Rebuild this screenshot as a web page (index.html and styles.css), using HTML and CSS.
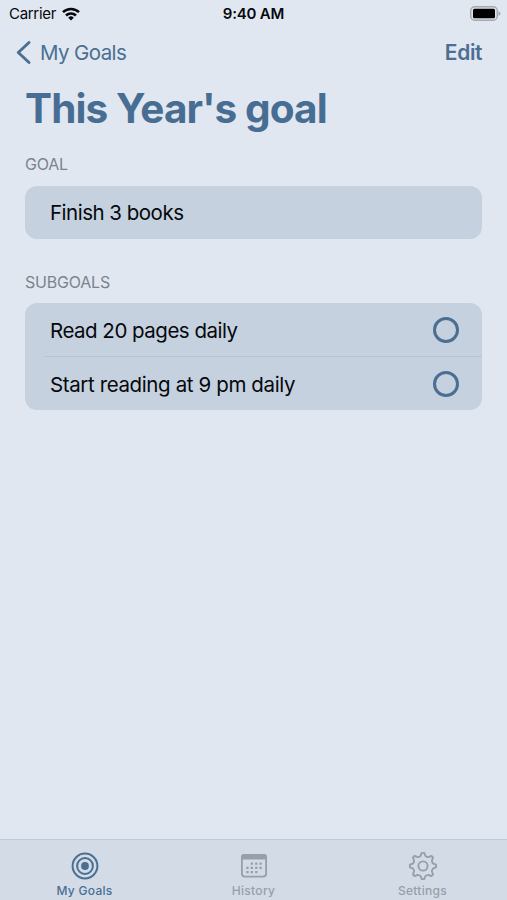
FILE: index.html
```html
<!DOCTYPE html>
<html lang="en">
<head>
<meta charset="utf-8">
<title>This Year's goal</title>
<link rel="stylesheet" href="styles.css">
</head>
<body>
<div class="screen">
  <div class="status">
    <div class="status-left">
      <span class="carrier">Carrier</span>
      <svg class="wifi" width="18" height="14" viewBox="0 0 18 14" fill="none" stroke="#05080c" stroke-width="2.500"><path d="M1 5.200a11.400 11.400 0 0 1 16 0M4 8.500a7.100 7.100 0 0 1 10 0"/><path d="M9 13.500L6.200 10.700a4 4 0 0 1 5.600 0z" fill="#05080c" stroke="none"/></svg>
    </div>
    <span class="time">9:40 AM</span>
    <svg class="battery" width="31" height="15" viewBox="0 0 31 15"><rect x=".7" y=".7" width="26.600" height="13.600" rx="4" fill="#dde1e8" stroke="#a5a9af" stroke-width="1.400"/><rect x="3" y="2.700" width="22" height="9.600" rx="1.500" fill="#000"/><path d="M28.500 5v5q2-1 2-2.500t-2-2.500z" fill="#a5a9af"/></svg>
  </div>
  <nav class="nav">
    <div class="back">
      <svg width="15" height="24" viewBox="0 0 15 24" fill="none" stroke="#4a6f93" stroke-width="2.900" stroke-linecap="round" stroke-linejoin="round"><path d="M13 1.500L2.300 11.500l10.700 10"/></svg>
      <span class="back-label">My Goals</span>
    </div>
    <span class="edit">Edit</span>
  </nav>
  <main class="content">
    <h1>This Year's goal</h1>
    <h2 class="first">GOAL</h2>
    <div class="card"><div class="row"><span class="t1">Finish 3 books</span></div></div>
    <h2 class="second">SUBGOALS</h2>
    <div class="card">
      <div class="row"><span class="t2">Read 20 pages daily</span><i class="check"></i></div>
      <div class="divider"></div>
      <div class="row"><span class="t3">Start reading at 9 pm daily</span><i class="check"></i></div>
    </div>
  </main>
  <footer class="tabs">
    <div class="tab active">
      <svg width="30" height="30" viewBox="-15 -15 30 30" fill="none" stroke="currentColor" stroke-width="2"><circle r="12.400"/><circle r="7.900"/><circle r="3.900" fill="currentColor" stroke="none"/></svg>
      <span>My Goals</span>
    </div>
    <div class="tab">
      <svg width="30" height="30" viewBox="0 0 30 30"><rect x="2.900" y="3.900" width="24.200" height="21.700" rx="3" fill="none" stroke="currentColor" stroke-width="1.800"/><path d="M2 8.500V6q0-3 3-3h20q3 0 3 3v2.500z" fill="currentColor"/><path d="M11.700 12.700h12M7.300 16.900h16.400M7.300 21.100h12" stroke="currentColor" stroke-width="2.300" stroke-dasharray="2.300 2.100" fill="none"/></svg>
      <span>History</span>
    </div>
    <div class="tab">
      <svg width="30" height="30" viewBox="-15 -15 30 30" fill="none" stroke="currentColor" stroke-width="1.900" stroke-linejoin="round"><path id="gear" d="M-1.300 -13Q0 -13.300 1.300 -13L2.400 -10.200Q3.700 -8.900 5.500 -8.900L8.300 -10.100Q9.400 -9.400 10.100 -8.300L8.900 -5.500Q8.900 -3.700 10.200 -2.400L13 -1.300Q13.300 0 13 1.300L10.200 2.400Q8.900 3.700 8.900 5.500L10.100 8.300Q9.400 9.400 8.300 10.100L5.500 8.900Q3.700 8.900 2.400 10.200L1.300 13Q0 13.300 -1.300 13L-2.400 10.200Q-3.700 8.900 -5.500 8.900L-8.300 10.100Q-9.400 9.400 -10.100 8.300L-8.900 5.500Q-8.900 3.700 -10.200 2.400L-13 1.300Q-13.300 0 -13 -1.300L-10.200 -2.400Q-8.900 -3.700 -8.900 -5.500L-10.100 -8.300Q-9.400 -9.400 -8.300 -10.100L-5.500 -8.900Q-3.700 -8.900 -2.400 -10.200Z"/><circle r="4.600"/></svg>
      <span>Settings</span>
    </div>
  </footer>
</div>
</body>
</html>
```
FILE: styles.css
```css
* { box-sizing: border-box; }
body { margin: 0; background: #e1e7f0; font-family: Inter, "Liberation Sans", sans-serif; color: #05080c; }
.screen { height: 900px; display: flex; flex-direction: column; }
.status { height: 27px; display: grid; grid-template-columns: 1fr auto 1fr; align-items: center; padding: 0 6px 0 9px; }
.status-left { display: flex; align-items: center; gap: 6px; }
.carrier { font-size: 15px; letter-spacing: -0.3px; }
.time { margin-right: 3px; font-size: 15px; font-weight: 600; letter-spacing: -0.2px; }
.battery { justify-self: end; }
.nav { height: 51px; display: flex; justify-content: space-between; align-items: center; padding: 0 25px 0 16px; color: #4a6f93; font-size: 21px; }
.back { display: flex; align-items: center; gap: 9px; }
.back-label { font-size: 20.500px; letter-spacing: -0.6px; }
.edit { font-weight: 600; letter-spacing: -0.4px; }
.content { flex: 1; padding: 0 25px; }
h1 { margin: 6px 0 0; height: 50px; line-height: 50px; font-size: 40.500px; font-weight: 700; letter-spacing: -0.900px; color: #486d92; white-space: nowrap; }
h2 { margin: 0; font-size: 16px; font-weight: 400; line-height: 20px; color: #7d838c; letter-spacing: -0.2px; }
.first { margin: 20px 0 12px; }
.second { margin: 33px 0 11px; }
.card { background: #c5d1de; border-radius: 12px; }
.row { height: 53px; display: flex; align-items: center; justify-content: space-between; padding: 0 23px 0 25px; font-size: 20.500px; }
.t1 { letter-spacing: -0.5px; }
.t2 { padding-top: 1px; letter-spacing: -0.500px; }
.t3 { padding-top: 1px; letter-spacing: -0.380px; }
.divider { height: 1px; margin-left: 19px; background: #b8c5d2; }
.check { width: 26px; height: 26px; border: 3px solid #4a6f93; border-radius: 50%; }
.tabs { height: 61px; border-top: 1px solid #c2cad5; background: #d2dbe6; display: grid; grid-template-columns: repeat(3, 1fr); }
.tab { display: flex; flex-direction: column; align-items: center; padding-top: 11px; color: #989fa8; font-size: 12px; font-weight: 500; line-height: 15px; letter-spacing: 0.3px; }
.tab span { margin-top: 2px; }
.active { color: #4a6f93; }
```
